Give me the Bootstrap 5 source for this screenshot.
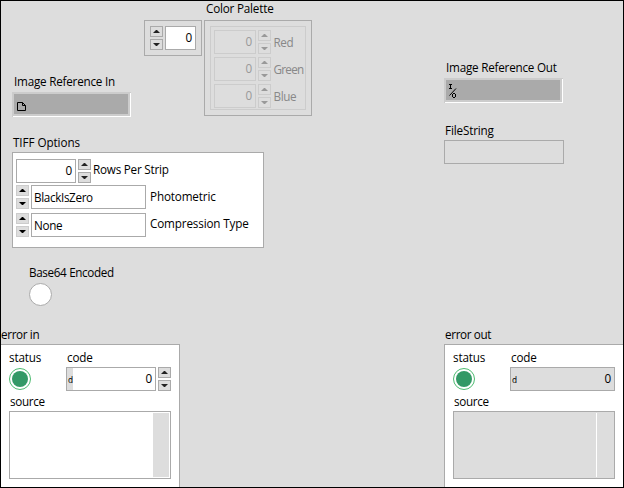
<!DOCTYPE html>
<html lang="en">
<head>
<meta charset="utf-8">
<title>TIFF Front Panel</title>
<link href="https://cdn.jsdelivr.net/npm/bootstrap@5.3.0/dist/css/bootstrap.min.css" rel="stylesheet">
<style>
body{width:624px;height:488px;overflow:hidden;background:#ddd;color:#000;font:11.7px/14px "Open Sans","Noto Sans",sans-serif;letter-spacing:-.15px}
.panel{width:624px;height:488px;border:1px solid #000}
.left-col{width:443px}
.right-col{width:179px;padding-top:59px}
.top-row{height:116px}
.ref-in{width:143px;padding:73px 0 0 11px}
.cap{height:17px;white-space:nowrap}
.cap-tall{height:18px}
.cap-palette{height:19px;padding-left:62px;letter-spacing:-.2px}
.in-1{padding-left:1px}
.in-2{padding-left:2px}
.tight{letter-spacing:-.35px}
.tighter{letter-spacing:-.7px}
.wide{letter-spacing:-.08px}
.snug{letter-spacing:-.22px}
.gap-px{gap:2px}
.line{border:1px solid #aaa}
.field{height:24px;line-height:22px;border:1px solid #aaa;background:#fff;padding:0 3px 0 2px;white-space:nowrap;flex:none}
.num{line-height:21px;text-align:right;padding-right:3px}
.off{background:#ddd}
.spin{width:13px;height:24px;gap:2px;flex:none}
.spin i{display:block;width:13px;height:11px;border:1px solid #aaa;background:#ddd;position:relative}
.spin i::after{content:"";position:absolute;left:2px;top:3px;width:7px;height:3px;background:#222;clip-path:polygon(50% -20%,100% 100%,0 100%)}
.spin i:last-child::after{clip-path:polygon(0 0,100% 0,50% 120%)}
.soft i{border-color:#ccc}
.soft i::after{background:#000}
.code-spin{margin-left:2px}
.refbox{width:119px;height:25px;background:#aaa;border:2px solid #ccc;border-right-width:3px;border-bottom-width:3px;position:relative}
.refbox::after{content:"";position:absolute;inset:-1px -3px -3px -1px;border:solid #fff;border-width:0 1px 1px 0}
.refbox svg{display:block}
.idx{width:58px;height:36px;padding:5px}
.idx .field,.code-in{flex:1}
.pal{width:108px;height:96px;padding:5px}
.pal-in{border:1px solid #ccc;height:84px;padding:3px 0 0 3px;gap:3px;color:#888}
.pal-in .channel{height:24px}
.pal-in .field{width:42px;background:#ddd;border-color:#ccc;color:#999}
.pal-in .spin i{border-color:#ccc}
.pal-in .spin i::after{background:#999}
.pal-in .name{line-height:24px;margin-left:.5px}
.tiff-group{margin:18px 0 0 11px}
.tiff{width:252px;height:96px;padding:6px 3px;background:#fff}
.rows{width:60px}
.rows-name{line-height:20px}
.choice{width:115px}
.choice-name{line-height:22px;padding-left:2px}
.choice-name-c{line-height:21px}
.row-b{margin-top:2px}
.row-c{margin-top:4px}
.base-group{margin:17px 0 0 28px}
.knob{width:23px;height:23px;border:1px solid #aaa;background:#fff}
.err-left{margin-top:21px}
.err-right{margin-top:163px}
.file-cap{margin-top:20px}
.file-field{width:120px}
.errbox{background:#fff;border:0 solid #aaa;border-top-width:1px;padding:5px 8px 0;height:143px}
.err-in{width:179px;border-right-width:1px}
.err-out{border-left-width:1px}
.led{width:22px;height:22px;margin-top:1px;border:1px solid #4dbb70;background:#fff;padding:2px}
.led::after{content:"";display:block;width:16px;height:16px;border-radius:50%;background:#339966}
.led-cell{width:57px}
.radix{font:8px/25px "DejaVu Sans",sans-serif;width:6px;height:22px;background:#ddd;margin-left:-2px;padding-left:1px;letter-spacing:0}
.src-cap{margin-top:3px}
.src{width:162px;height:68px;padding:1px}
.bar{width:16px;height:64px;background:#ddd}
.rule{width:1px;height:64px;background:#fff;margin-right:16px}
</style>
<script src="https://cdn.jsdelivr.net/npm/bootstrap@5.3.0/dist/js/bootstrap.bundle.min.js"></script>
</head>
<body>
<main class="panel d-flex">
  <section class="left-col d-flex flex-column">
    <div class="top-row d-flex">
      <div class="ref-in">
        <div class="cap cap-tall in-2 snug">Image Reference In</div>
        <div class="refbox"><svg width="16" height="20"><path d="M3.500 8.500h5l3 3v5h-8zM8.500 8.500v3h3" fill="none" stroke="#000"/></svg></div>
      </div>
      <div>
        <div class="cap cap-palette">Color Palette</div>
        <div class="d-flex align-items-start gap-px">
          <div class="idx line d-flex gap-px">
            <div class="spin d-flex flex-column"><i></i><i></i></div>
            <div class="field num">0</div>
          </div>
          <div class="pal line">
            <div class="pal-in d-flex flex-column">
              <div class="channel d-flex gap-px"><div class="field num">0</div><div class="spin d-flex flex-column"><i></i><i></i></div><span class="name tight">Red</span></div>
              <div class="channel d-flex gap-px"><div class="field num">0</div><div class="spin d-flex flex-column"><i></i><i></i></div><span class="name tighter">Green</span></div>
              <div class="channel d-flex gap-px"><div class="field num">0</div><div class="spin d-flex flex-column"><i></i><i></i></div><span class="name tight">Blue</span></div>
            </div>
          </div>
        </div>
      </div>
    </div>
    <div class="tiff-group">
      <div class="cap in-1 wide">TIFF Options</div>
      <div class="tiff line">
        <div class="d-flex gap-px">
          <div class="field num rows">0</div>
          <div class="spin d-flex flex-column"><i></i><i></i></div>
          <span class="rows-name snug">Rows Per Strip</span>
        </div>
        <div class="d-flex gap-px row-b">
          <div class="spin soft d-flex flex-column"><i></i><i></i></div>
          <div class="field choice tight">BlackIsZero</div>
          <span class="choice-name">Photometric</span>
        </div>
        <div class="d-flex gap-px row-c">
          <div class="spin soft d-flex flex-column"><i></i><i></i></div>
          <div class="field choice tight">None</div>
          <span class="choice-name choice-name-c">Compression Type</span>
        </div>
      </div>
    </div>
    <div class="base-group">
      <div class="cap cap-tall tight">Base64 Encoded</div>
      <div class="knob rounded-circle"></div>
    </div>
    <div class="err-left">
      <div class="cap tight">error in</div>
      <div class="errbox err-in">
        <div class="d-flex cap"><span class="led-cell">status</span><span class="in-1">code</span></div>
        <div class="d-flex">
          <div class="led-cell"><div class="led rounded-circle"></div></div>
          <div class="field num code-in d-flex"><span class="radix">d</span><span class="ms-auto">0</span></div>
          <div class="spin code-spin d-flex flex-column"><i></i><i></i></div>
        </div>
        <div class="cap src-cap in-1 tight">source</div>
        <div class="src line d-flex justify-content-end"><div class="bar"></div></div>
      </div>
    </div>
  </section>
  <section class="right-col">
    <div class="cap cap-tall in-2 snug">Image Reference Out</div>
    <div class="refbox"><svg width="16" height="20" fill="none" stroke="#000"><path d="M3 4.500h3M4.500 4v5M3 8.500h3M10 8.500L3.500 15.500M7 13.500h2M7 17.500h2M6.500 14v3M9.500 14v3"/></svg></div>
    <div class="cap file-cap in-1">FileString</div>
    <div class="field off file-field"></div>
    <div class="err-right">
      <div class="cap in-1 tight">error out</div>
      <div class="errbox err-out">
        <div class="d-flex cap"><span class="led-cell">status</span><span class="in-1">code</span></div>
        <div class="d-flex">
          <div class="led-cell"><div class="led rounded-circle"></div></div>
          <div class="field num off code-in d-flex"><span class="radix">d</span><span class="ms-auto">0</span></div>
        </div>
        <div class="cap src-cap in-1 tight">source</div>
        <div class="src line off d-flex justify-content-end"><div class="rule"></div></div>
      </div>
    </div>
  </section>
</main>
</body>
</html>
